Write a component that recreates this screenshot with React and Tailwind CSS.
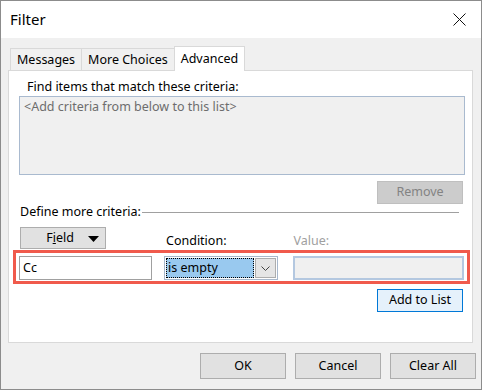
import React from "react";

const FONT = { fontFamily: '"Noto Sans", "Open Sans", Arial, sans-serif' };

function Tab({ label, active }) {
  if (active)
    return (
      <div className="relative z-10 h-[25px] -mb-px px-[6px] pt-[3px] bg-white border border-b-0 border-[#d9d9d9] text-[12.5px] text-black">
        {label}
      </div>
    );
  return (
    <div className="h-[22px] px-[6px] pt-[3px] bg-[#f0f0f0] border border-r-0 border-b-0 border-[#d9d9d9] text-[12.5px] text-black leading-[16px]">
      {label}
    </div>
  );
}

function Btn({ children, className = "" }) {
  return (
    <div
      className={`flex items-center justify-center bg-[#e1e1e1] border border-[#adadad] text-[12.5px] text-black ${className}`}
    >
      {children}
    </div>
  );
}

export default function App() {
  return (
    <div
      className="w-[482px] h-[390px] bg-[#f0f0f0] border border-[#8c8c8c] flex flex-col"
      style={FONT}
    >
      {/* Title bar */}
      <div className="h-[37px] bg-white flex items-center justify-between pl-[9px] pr-[15px]">
        <span className="text-[15px] text-black">Filter</span>
        <svg width="13" height="13" viewBox="0 0 13 13">
          <path d="M0.5 0.5 L12.5 12.5 M12.5 0.5 L0.5 12.5" stroke="#111" strokeWidth="1" />
        </svg>
      </div>

      <div className="flex flex-col px-[7px] pt-[8px]">
        {/* Tabs */}
        <div className="flex items-end ml-[2px] h-[24px]">
          <Tab label="Messages" />
          <Tab label="More Choices" />
          <Tab label="Advanced" active />
        </div>

        {/* Panel */}
        <div className="w-[465px] h-[273px] bg-white border border-[#d9d9d9] flex flex-col">
          <div className="mt-[8px] ml-[18px] text-[12.5px] leading-[16px] text-black">
            Find items that match these criteria:
          </div>
          <div className="mt-px ml-[10px] w-[446px] h-[79px] bg-[#f0f0f0] border border-[#a9bacf] px-[4px] pt-[2px] text-[12.5px] leading-[16px] text-[#6d6d6d]">
            &lt;Add criteria from below to this list&gt;
          </div>
          <div className="flex justify-end mr-[9px] mt-[6px]">
            <div className="w-[86px] h-[23px] flex items-center justify-center bg-[#cccccc] border border-[#bfbfbf] text-[12.5px] text-[#838383]">
              Remove
            </div>
          </div>

          <div className="flex items-center ml-[11px] mr-[13px] h-[16px]">
            <span className="text-[12.5px] text-black">Define more criteria:</span>
            <div className="flex-1 h-px bg-[#a0a0a0] ml-px" />
          </div>

          <div className="flex items-end ml-[11px] mt-[7px] h-[22px]">
            <Btn className="w-[86px] h-[22px] relative">
              <span className="mr-[6px]">
                F<span className="underline">i</span>eld
              </span>
              <svg className="absolute right-[6px] top-[8px]" width="11" height="6" viewBox="0 0 11 6">
                <path d="M0 0 H11 L5.5 6 Z" fill="#000" />
              </svg>
            </Btn>
            <span className="ml-[60px] text-[12.5px] leading-[16px] text-black">Condition:</span>
            <span className="ml-[67px] text-[12.5px] leading-[16px] text-[#a0a0a0]">Value:</span>
          </div>

          {/* Highlighted row */}
          <div className="ml-[4px] mt-px w-[457px] h-[34px] border-[3px] border-[#f05a4c] flex pt-[3px] pl-[3px]">
            <div className="w-[133px] h-[24px] bg-white border border-[#a0a0a0] flex items-center pl-[3px] text-[12.5px] text-black">
              Cc
            </div>
            <div className="ml-[12px] w-[114px] h-[24px] border border-[#a8b8cc] flex p-px">
              <div className="flex-1 bg-[#99c9ef] border border-dotted border-black flex items-center pl-px text-[12.5px] text-black">
                is empty
              </div>
              <div className="ml-px w-[21px] bg-[#e5e5e5] border border-[#adadad] flex items-center justify-center">
                <svg width="9" height="5" viewBox="0 0 9 5">
                  <path d="M0.5 0.5 L4.5 4.5 L8.5 0.5" stroke="#444" strokeWidth="1" fill="none" />
                </svg>
              </div>
            </div>
            <div className="ml-[15px] w-[171px] h-[24px] bg-[#f0f0f0] border-2 border-[#b4c8e0]" />
          </div>

          <div className="flex justify-end mr-[9px] mt-[5px]">
            <div className="w-[86px] h-[23px] flex items-center justify-center bg-[#e5f1fb] border border-[#0078d7] text-[12.5px] text-black">
              Add to List
            </div>
          </div>
        </div>

        {/* Bottom buttons */}
        <div className="flex justify-end gap-[9px] mt-[10px] mr-[-2px]">
          <Btn className="w-[86px] h-[26px]">OK</Btn>
          <Btn className="w-[86px] h-[26px]">Cancel</Btn>
          <Btn className="w-[86px] h-[26px]">Clear All</Btn>
        </div>
      </div>
    </div>
  );
}
